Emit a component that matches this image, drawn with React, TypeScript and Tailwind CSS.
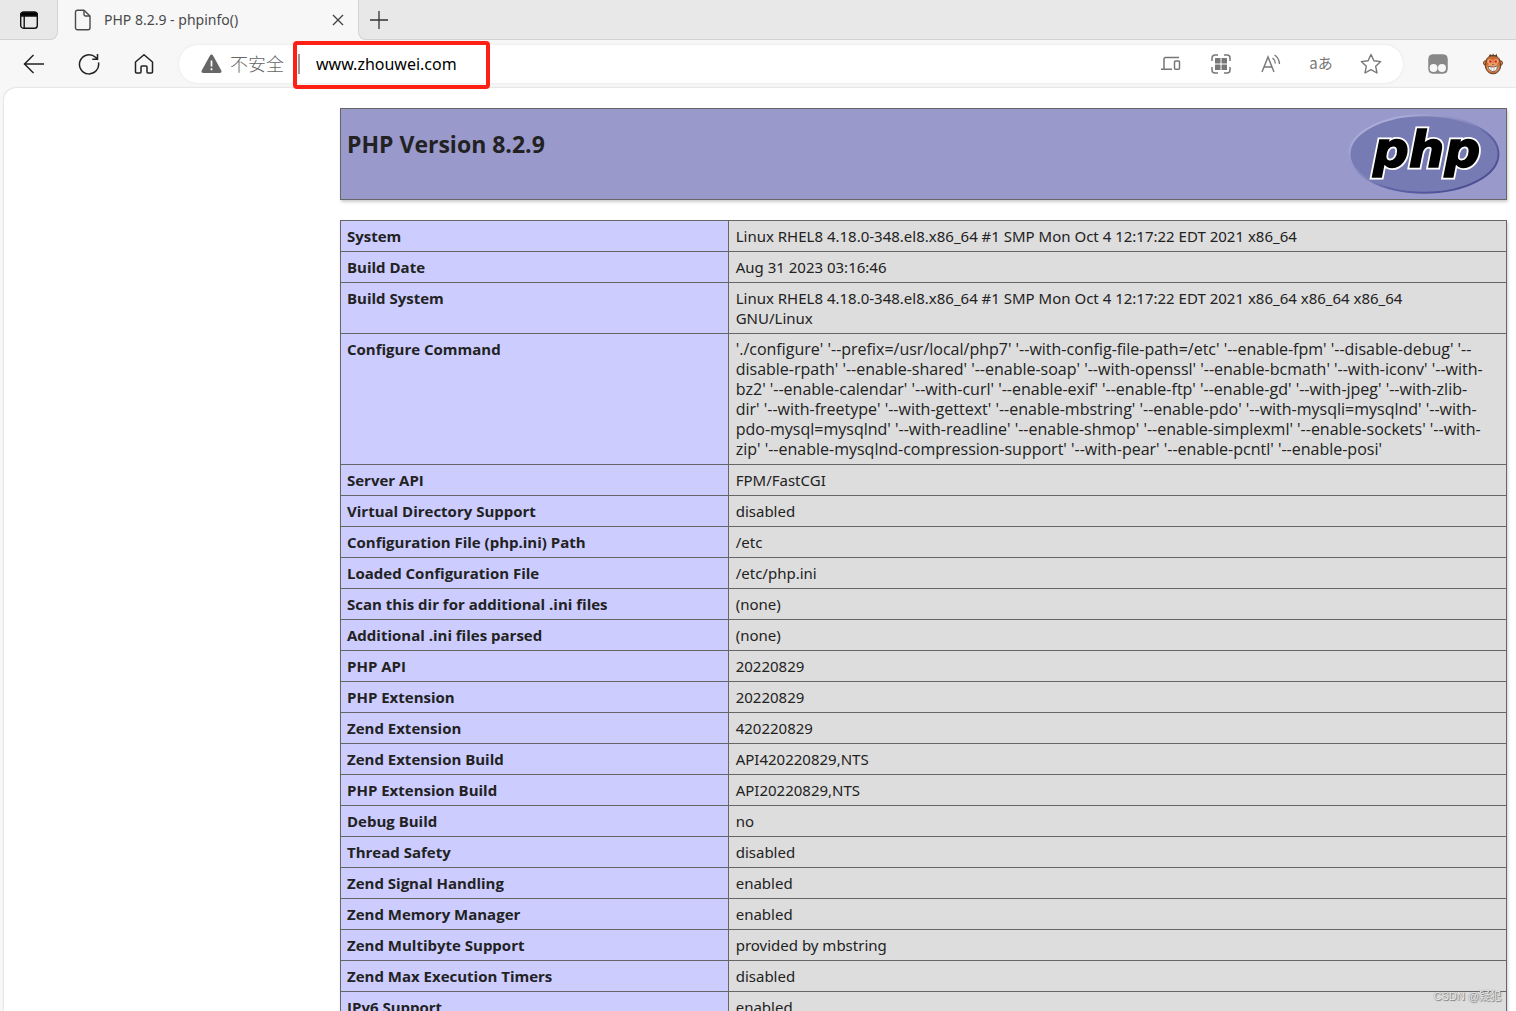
import type { ReactNode } from "react";

const rows: [string, string[]][] = [
  ["System", ["Linux RHEL8 4.18.0-348.el8.x86_64 #1 SMP Mon Oct 4 12:17:22 EDT 2021 x86_64"]],
  ["Build Date", ["Aug 31 2023 03:16:46"]],
  [
    "Build System",
    ["Linux RHEL8 4.18.0-348.el8.x86_64 #1 SMP Mon Oct 4 12:17:22 EDT 2021 x86_64 x86_64 x86_64", "GNU/Linux"],
  ],
  [
    "Configure Command",
    [
      "'./configure' '--prefix=/usr/local/php7' '--with-config-file-path=/etc' '--enable-fpm' '--disable-debug' '--",
      "disable-rpath' '--enable-shared' '--enable-soap' '--with-openssl' '--enable-bcmath' '--with-iconv' '--with-",
      "bz2' '--enable-calendar' '--with-curl' '--enable-exif' '--enable-ftp' '--enable-gd' '--with-jpeg' '--with-zlib-",
      "dir' '--with-freetype' '--with-gettext' '--enable-mbstring' '--enable-pdo' '--with-mysqli=mysqlnd' '--with-",
      "pdo-mysql=mysqlnd' '--with-readline' '--enable-shmop' '--enable-simplexml' '--enable-sockets' '--with-",
      "zip' '--enable-mysqlnd-compression-support' '--with-pear' '--enable-pcntl' '--enable-posi'",
    ],
  ],
  ["Server API", ["FPM/FastCGI"]],
  ["Virtual Directory Support", ["disabled"]],
  ["Configuration File (php.ini) Path", ["/etc"]],
  ["Loaded Configuration File", ["/etc/php.ini"]],
  ["Scan this dir for additional .ini files", ["(none)"]],
  ["Additional .ini files parsed", ["(none)"]],
  ["PHP API", ["20220829"]],
  ["PHP Extension", ["20220829"]],
  ["Zend Extension", ["420220829"]],
  ["Zend Extension Build", ["API420220829,NTS"]],
  ["PHP Extension Build", ["API20220829,NTS"]],
  ["Debug Build", ["no"]],
  ["Thread Safety", ["disabled"]],
  ["Zend Signal Handling", ["enabled"]],
  ["Zend Memory Manager", ["enabled"]],
  ["Zend Multibyte Support", ["provided by mbstring"]],
  ["Zend Max Execution Timers", ["disabled"]],
  ["IPv6 Support", ["enabled"]],
];

function IconButton({ label, className = "", children }: { label: string; className?: string; children: ReactNode }) {
  return (
    <button type="button" aria-label={label} className={`flex shrink-0 items-center justify-center ${className}`}>
      {children}
    </button>
  );
}

function TabStrip() {
  return (
    <div className="flex h-10 shrink-0 bg-[#f7f7f7]">
      <div className="flex w-[58px] shrink-0 rounded-br-lg border-r border-b border-[#d2d2d2] bg-[#e8e8e8]">
        <IconButton label="Tab actions" className="w-full">
          <svg width="20" height="20" viewBox="0 0 20 20" fill="none" stroke="#111" strokeWidth="1.4">
            <rect x="1.7" y="2.2" width="16.6" height="16" rx="2.8" />
            <path d="M1.7 6V5a2.8 2.8 0 0 1 2.8-2.8h11a2.8 2.8 0 0 1 2.8 2.8v1z" fill="#000" />
            <path d="M5.2 6v12" />
          </svg>
        </IconButton>
      </div>
      <div className="flex w-[300px] shrink-0 items-center pr-2 pb-px pl-4">
        <svg width="18" height="22" viewBox="0 0 18 22" fill="none" stroke="#4a4a4a" strokeWidth="1.4" strokeLinejoin="round">
          <path d="M3.5 1.2H10L16 7v11.8a2 2 0 0 1-2 2H3.500a2 2 0 0 1-2-2V3.200a2 2 0 0 1 2-2z" />
          <path d="M10 1.500V5.500a1.500 1.500 0 0 0 1.500 1.500H16" />
        </svg>
        <span className="ml-3 grow font-['Noto_Sans',sans-serif] text-[14px] whitespace-nowrap text-[#4a4a4a]">
          PHP 8.2.9 - phpinfo()
        </span>
        <IconButton label="Close tab" className="size-6">
          <svg width="12" height="12" viewBox="0 0 12 12" stroke="#444" strokeWidth="1.400">
            <path d="M1 1l10 10M11 1L1 11" />
          </svg>
        </IconButton>
      </div>
      <div className="flex grow rounded-bl-lg border-b border-l border-[#d2d2d2] bg-[#e8e8e8]">
        <IconButton label="New tab" className="w-10">
          <svg width="18" height="18" viewBox="0 0 18 18" stroke="#333" strokeWidth="1.300">
            <path d="M9 0v18M0 9h18" />
          </svg>
        </IconButton>
      </div>
    </div>
  );
}

function AddressBar() {
  return (
    <div className="flex h-12 shrink-0 items-center pr-[13px] pb-px pl-5">
      <IconButton label="Back" className="mr-[27px] size-7">
        <svg width="22" height="20" viewBox="0 0 22 20" fill="none" stroke="#222" strokeWidth="1.500">
          <path d="M21 10H1.500M10.500 1L1.500 10l9 9" />
        </svg>
      </IconButton>
      <IconButton label="Refresh" className="mr-[27px] size-7">
        <svg width="22" height="22" viewBox="0 0 22 22" fill="none" stroke="#222" strokeWidth="1.500">
          <path d="M20.500 9.500A9.600 9.600 0 1 1 17.500 4.200L19.500 6M19.500 1v5.200h-5.200" />
        </svg>
      </IconButton>
      <IconButton label="Home" className="mr-[21px] size-7">
        <svg width="20" height="22" viewBox="0 0 20 22" fill="none" stroke="#222" strokeWidth="1.500" strokeLinejoin="round">
          <path d="M1.500 9L10 1.800 18.500 9v10a1 1 0 0 1-1 1H14a1 1 0 0 1-1-1v-5a1 1 0 0 0-1-1H8a1 1 0 0 0-1 1v5a1 1 0 0 1-1 1H2.500a1 1 0 0 1-1-1z" />
        </svg>
      </IconButton>
      <div className="relative flex h-[38px] grow items-center rounded-full bg-white pr-[18px] pl-[22px] shadow-[0_0_3px_#e4e4e4]">
        <svg className="shrink-0" width="21" height="20" viewBox="0 0 21 20">
          <path d="M9 1.500a1.700 1.700 0 0 1 3 0l8.300 15a1.700 1.700 0 0 1-1.500 2.500H2.200a1.700 1.700 0 0 1-1.500-2.500z" fill="#666" />
          <path d="M10.500 6.500v6M10.500 14.300v1.900" stroke="#fff" strokeWidth="1.700" />
        </svg>
        <span className="ml-2 font-['Noto_Sans_CJK_SC',sans-serif] text-[18px] font-light whitespace-nowrap text-[#666]">
          不安全
        </span>
        <span className="ml-[14px] h-5 w-0.5 bg-[#999]" />
        <input
          aria-label="Address"
          defaultValue="www.zhouwei.com"
          className="ml-4 w-40 grow bg-transparent font-['Noto_Sans',sans-serif] text-[16px] text-black outline-none"
        />
        <div className="pointer-events-none absolute -top-1 left-[114px] h-12 w-[197px] rounded border-4 border-[#ff2015]" />
        <div className="flex items-center gap-[22px] text-[#777]">
          <IconButton label="Send to device" className="size-7">
            <svg width="20" height="16" viewBox="0 0 20 16" fill="none" stroke="currentColor" strokeWidth="1.500">
              <path d="M3 13V3a1.500 1.500 0 0 1 1.500-1.500H18M0 13.300h11" />
              <rect x="13.500" y="5" width="5" height="8.300" rx="1" />
            </svg>
          </IconButton>
          <IconButton label="Apps" className="size-7">
            <svg width="20" height="20" viewBox="0 0 20 20" fill="none" stroke="currentColor" strokeWidth="1.500">
              <path d="M1 7V4a3 3 0 0 1 3-3h3M13 1h3a3 3 0 0 1 3 3v3M19 13v3a3 3 0 0 1-3 3h-3M7 19H4a3 3 0 0 1-3-3v-3" />
              <g fill="currentColor" stroke="none">
                <rect x="4" y="4" width="5.500" height="5.500" rx=".5" />
                <rect x="10.500" y="4" width="5.500" height="5.500" rx=".5" />
                <rect x="4" y="10.500" width="5.500" height="5.500" rx=".5" />
                <rect x="10.500" y="10.500" width="5.500" height="5.500" rx=".5" />
              </g>
            </svg>
          </IconButton>
          <IconButton label="Read aloud" className="size-7">
            <svg width="22" height="22" viewBox="0 0 22 22" fill="none" stroke="currentColor" strokeWidth="1.400">
              <path d="M2 19L8 4l6 15M4.200 14h7.600M12.500 5c1.700 1.200 2.600 3 2.800 5.500M14.500 2c3.200 2 4.800 5 5 9" />
            </svg>
          </IconButton>
          <IconButton label="Translate" className="h-7 w-7 font-['Noto_Sans_CJK_JP',sans-serif] text-[15px] whitespace-nowrap">
            aあ
          </IconButton>
          <IconButton label="Add to favourites" className="size-7">
            <svg width="22" height="22" viewBox="0 0 22 22" fill="none" stroke="currentColor" strokeWidth="1.400" strokeLinejoin="round">
              <path d="M11 1.500l2.900 6.200 6.800.9-5 4.700 1.300 6.700-6-3.300L5 20l1.300-6.700-5-4.700 6.800-.9z" />
            </svg>
          </IconButton>
        </div>
      </div>
      <IconButton label="Extension" className="ml-[21px] size-7">
        <svg width="20" height="20" viewBox="0 0 20 20">
          <rect x=".5" y=".5" width="19" height="19" rx="4" fill="#888" />
          <circle cx="5.500" cy="14" r="4" fill="#f7f7f7" />
          <circle cx="14" cy="14" r="4" fill="#f7f7f7" />
          <rect x="1" y="1" width="18" height="18" rx="4" fill="none" stroke="#888" />
        </svg>
      </IconButton>
      <IconButton label="Monkey extension" className="-mr-1 ml-[27px] size-7">
        <svg width="20" height="22" viewBox="0 0 20 22">
          <path d="M6 3l1-2 2 1.500L10 .5l1.500 2L14 1v3z" fill="#5b3a24" />
          <circle cx="2.800" cy="10" r="2.300" fill="#e08a50" stroke="#6b3f24" />
          <circle cx="17.200" cy="10" r="2.300" fill="#e08a50" stroke="#6b3f24" />
          <path d="M10 2.800c5 0 7 3 7 6.500 1 2 1 5-.5 7.500-1.500 2.700-4 4-6.500 4s-5-1.300-6.500-4C2 14.300 2 11.300 3 9.300c0-3.500 2-6.500 7-6.500z" fill="#c96a35" stroke="#5b3a24" />
          <ellipse cx="7" cy="8.500" rx="2.600" ry="2.300" fill="#f3ad75" />
          <ellipse cx="13" cy="8.500" rx="2.600" ry="2.300" fill="#f3ad75" />
          <circle cx="7.300" cy="8.500" r="1.300" fill="#e02020" />
          <circle cx="12.700" cy="8.500" r="1.300" fill="#e02020" />
          <ellipse cx="10" cy="14.500" rx="6" ry="4.500" fill="#eda06a" />
          <path d="M9 11.500h.6M10.600 11.500h.6" stroke="#5b3a24" />
          <path d="M5 13.200q5 2 10-.4-.3 5.500-5 5.700-4-.1-5-5.300z" fill="#fff" stroke="#5b3a24" strokeWidth=".7" />
          <path d="M8 14v4M11 14.300v4M13.300 13.800v3" stroke="#777" strokeWidth=".5" />
        </svg>
      </IconButton>
    </div>
  );
}

function PhpLogo() {
  return (
    <svg className="shrink-0" width="152" height="82" viewBox="0 0 152 82" role="img" aria-label="PHP logo">
      <defs>
        <linearGradient id="rim" x1="0" y1="0" x2="1" y2="1">
          <stop offset="0" stopColor="#c0c2e4" />
          <stop offset=".45" stopColor="#8488be" />
          <stop offset=".6" stopColor="#5f62a4" />
          <stop offset="1" stopColor="#41438a" />
        </linearGradient>
      </defs>
      <ellipse cx="76" cy="41" rx="74.500" ry="38.800" fill="#777bb3" stroke="url(#rim)" strokeWidth="2" />
      <g
        fontFamily="DejaVu Sans, sans-serif"
        fontSize="50"
        fontWeight="700"
        fontStyle="italic"
        strokeLinejoin="miter"
      >
        <text x="25" y="54" fill="#fff" stroke="#fff" strokeWidth="5" aria-hidden="true">
          php
        </text>
        <text x="25" y="54" fill="#000" stroke="#000" strokeWidth="1.500">
          php
        </text>
      </g>
    </svg>
  );
}

export default function App() {
  return (
    <div className="relative flex h-screen flex-col overflow-hidden bg-[#f7f7f7]">
      <TabStrip />
      <AddressBar />
      <main className="ml-1 min-h-0 grow overflow-hidden rounded-tl-xl bg-white pt-5 pr-[9px] pl-[336px] font-['Noto_Sans',sans-serif] text-[15px] leading-5 text-[#222] shadow-[0_0_2px_#bbb]">
        <header className="mb-5 flex justify-between border border-[#666] bg-[#9999cc] px-1.5 pt-1 pb-1 shadow-[1px_2px_3px_#ccc]">
          <h1 className="pt-[15px] font-['Open_Sans',sans-serif] text-[23px] leading-8 font-bold">PHP Version 8.2.9</h1>
          <PhpLogo />
        </header>
        <table className="w-full table-fixed border-collapse text-left align-top shadow-[1px_2px_3px_#ccc]">
          <colgroup>
            <col className="w-[33.25%]" />
            <col />
          </colgroup>
          <tbody>
            {rows.map(([name, lines]) => (
              <tr key={name}>
                <th scope="row" className="border border-[#666] bg-[#ccccff] px-1.5 py-[5px] align-top font-['Open_Sans',sans-serif] font-bold">
                  {name}
                </th>
                <td className={`border border-[#666] bg-[#dddddd] py-[5px] pr-1.5 pl-[7px] align-top ${lines.length > 2 ? "font-['Open_Sans',sans-serif] text-[16px]" : ""}`}>
                  {lines.map((line) => (
                    <div key={line} className="whitespace-nowrap">
                      {line}
                    </div>
                  ))}
                </td>
              </tr>
            ))}
          </tbody>
        </table>
      </main>
      <div className="absolute right-[15px] bottom-[7px] font-['Liberation_Sans','Noto_Sans_CJK_SC',sans-serif] text-[11px] leading-4 text-[#eee] [text-shadow:1px_1px_1px_#777,0_0_1px_#777]">
        CSDN @疑犯
      </div>
    </div>
  );
}
